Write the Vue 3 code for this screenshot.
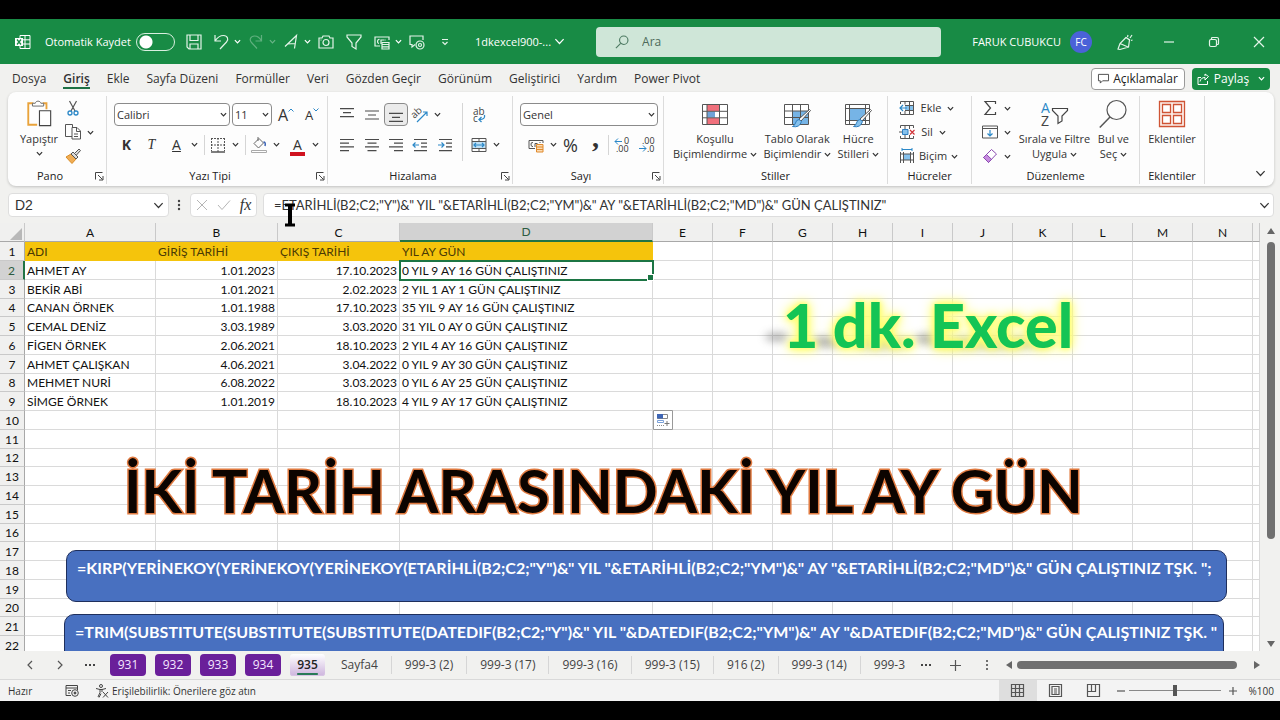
<script setup>
import { h, ref } from 'vue'

const Chev = () =>
  h('svg', { viewBox: '0 0 8 8', width: 7, height: 7, fill: 'none', stroke: 'currentColor', 'stroke-width': 1.4, 'aria-hidden': 'true' }, [
    h('path', { d: 'M1 2.5 4 5.5 7 2.5' }),
  ])
const BigChev = () =>
  h('svg', { viewBox: '0 0 12 12', width: 11, height: 11, fill: 'none', stroke: 'currentColor', 'stroke-width': 1.3, 'aria-hidden': 'true' }, [
    h('path', { d: 'M1.5 3.5 6 8.2 10.5 3.5' }),
  ])
const Launcher = () =>
  h('svg', { viewBox: '0 0 9 9', width: 9, height: 9, fill: 'none', stroke: '#444', 'stroke-width': 1, 'aria-hidden': 'true' }, [
    h('path', { d: 'M.5 7.5V.5H7.5M3 3 7.5 7.5M8 4V8H4' }),
  ])
const Lines = (props) =>
  h('svg', { viewBox: '0 0 16 16', width: 16, height: 16, fill: 'none', stroke: '#4a4a4a', 'stroke-width': 1.2, 'aria-hidden': 'true' }, [
    h('path', { d: props.d }),
  ])
Lines.props = ['d']

const menu = ['Dosya', 'Giriş', 'Ekle', 'Sayfa Düzeni', 'Formüller', 'Veri', 'Gözden Geçir', 'Görünüm', 'Geliştirici', 'Yardım', 'Power Pivot']
const columns = ['A', 'B', 'C', 'D', 'E', 'F', 'G', 'H', 'I', 'J', 'K', 'L', 'M', 'N', '']
const data = [
  ['ADI', 'GİRİŞ TARİHİ', 'ÇIKIŞ TARİHİ', 'YIL AY GÜN'],
  ['AHMET AY', '1.01.2023', '17.10.2023', '0 YIL 9 AY 16 GÜN ÇALIŞTINIZ'],
  ['BEKİR ABİ', '1.01.2021', '2.02.2023', '2 YIL 1 AY 1 GÜN ÇALIŞTINIZ'],
  ['CANAN ÖRNEK', '1.01.1988', '17.10.2023', '35 YIL 9 AY 16 GÜN ÇALIŞTINIZ'],
  ['CEMAL DENİZ', '3.03.1989', '3.03.2020', '31 YIL 0 AY 0 GÜN ÇALIŞTINIZ'],
  ['FİGEN ÖRNEK', '2.06.2021', '18.10.2023', '2 YIL 4 AY 16 GÜN ÇALIŞTINIZ'],
  ['AHMET ÇALIŞKAN', '4.06.2021', '3.04.2022', '0 YIL 9 AY 30 GÜN ÇALIŞTINIZ'],
  ['MEHMET NURİ', '6.08.2022', '3.03.2023', '0 YIL 6 AY 25 GÜN ÇALIŞTINIZ'],
  ['SİMGE ÖRNEK', '1.01.2019', '18.10.2023', '4 YIL 9 AY 17 GÜN ÇALIŞTINIZ'],
]
const purple = ['931', '932', '933', '934']
const sheets = ['Sayfa4', '999-3 (2)', '999-3 (17)', '999-3 (16)', '999-3 (15)', '916 (2)', '999-3 (14)', '999-3']
const formula = ref('=ETARİHLİ(B2;C2;"Y")&" YIL "&ETARİHLİ(B2;C2;"YM")&" AY "&ETARİHLİ(B2;C2;"MD")&" GÜN ÇALIŞTINIZ"')
const cellName = ref('D2')
const zoom = ref(50)
</script>

<template>
  <div class="screen">
    <div class="window">
      <header class="titlebar">
        <div class="quick">
          <svg class="logo" viewBox="0 0 16 16" width="16" height="16" fill="none" stroke="#fff"><path d="M5 1.500h10v13H5zM5 5.800h10M5 10h10M10 1.500v13" /><rect x="0" y="4" width="8" height="8" fill="#fff" stroke="none" /><path d="M2 5.500 6 10.500M6 5.500 2 10.500" stroke="#188b45" stroke-width="1.300" /></svg>
          <label class="auto" for="autosave">Otomatik Kaydet</label>
          <input id="autosave" class="toggle" type="checkbox" role="switch" />
          <button class="q save" aria-label="Kaydet"><svg viewBox="0 0 16 16" width="16" height="16"><path d="M1 1h14v14H3L1 13zM4 1v5.500h8V1M4 15v-5h8v5" /></svg></button>
          <button class="q" aria-label="Geri Al"><svg viewBox="0 0 16 16" width="16" height="16"><path d="M2 1v6h6M2 7C4 4 7 1.500 10.500 1.500c4 0 5.500 4 3 6.500L7 15" /></svg></button>
          <button class="qc" aria-label="Geri alma listesi"><Chev /></button>
          <button class="q dim" aria-label="Yinele"><svg viewBox="0 0 16 16" width="16" height="16"><path d="M13.500 1v6h-6M13.500 7C12 4 9 2 6.500 2 2.500 2 1 6 3.500 8.500L9 14.500" /></svg></button>
          <button class="qc dim" aria-label="Yineleme listesi"><Chev /></button>
          <button class="q" aria-label="Yazı"><svg viewBox="0 0 16 16" width="16" height="16"><path d="M2 12.500 13.500 1.500 11.500 14.500M4.500 10l7.500-.500" /></svg></button>
          <button class="qc" aria-label="Yazı seçenekleri"><Chev /></button>
          <button class="q cam" aria-label="Kamera"><svg viewBox="0 0 16 16" width="16" height="16"><path d="M1 4h3l1-2h6l1 2h3v10H1zM2.500 6h1" /><circle cx="8" cy="8.500" r="3" /></svg></button>
          <button class="q filter" aria-label="Filtre"><svg viewBox="0 0 16 16" width="16" height="16"><path d="M1 1h14v2L10 9v6l-4-2.500V9L1 3z" /></svg></button>
          <button class="q" aria-label="Muhasebe"><svg viewBox="0 0 16 16" width="16" height="16"><path d="M15 6V3H1v9h5M5.500 5.500C3 5 3 9.500 5 9.500M7 10V6h3M11 5.500v1" /><path d="M8 8.500h7V15H8zM8 10.500h7M8 12.800h7" /></svg></button>
          <button class="qc" aria-label="Muhasebe seçenekleri"><Chev /></button>
          <button class="q" aria-label="Nesne"><svg viewBox="0 0 16 16" width="16" height="16"><path d="M14 6V2H1v8.500h2V13l3-2.500" /><circle cx="11" cy="11" r="4" /><circle cx="11" cy="11" r="1.500" /></svg></button>
          <button class="q more" aria-label="Araç çubuğunu özelleştir"><svg viewBox="0 0 8 8" width="8" height="8"><path d="M1 1.500h6M1.500 4 4 6.500 6.500 4" /></svg></button>
        </div>
        <button class="doc">1dkexcel900-... <BigChev /></button>
        <label class="search">
          <svg viewBox="0 0 16 16" width="14" height="14" fill="none" stroke="#4d7a62" stroke-width="1.300"><circle cx="10" cy="6" r="4.800" /><path d="M6.500 9.500 1 15" /></svg>
          <input type="text" placeholder="Ara" aria-label="Ara" />
        </label>
        <div class="account">
          <span>FARUK CUBUKCU</span>
          <span class="avatar">FC</span>
          <button class="q pen" aria-label="Çizim"><svg viewBox="0 0 16 16" width="16" height="16"><path d="M9 3.500 3 9.500 1 15l2 .500L11.500 13l1-7zM3 9.500l8 3.500M9 3.500l4 2.500M10.500 3l.500-2M13 4l2-3M14 6.500l1.500-.500" /></svg></button>
          <button class="w" aria-label="Simge durumuna küçült"><svg viewBox="0 0 10 10" width="10" height="10"><path d="M0 5h10" /></svg></button>
          <button class="w" aria-label="Önceki boyut"><svg viewBox="0 0 10 10" width="10" height="10"><rect x=".5" y="2.500" width="7" height="7" rx="1.500" /><path d="M2.500 2.500V1.500q0-1 1-1h4.500q1.500 0 1.500 1.500v4.500q0 1-1 1h-1" /></svg></button>
          <button class="w" aria-label="Kapat"><svg viewBox="0 0 10 10" width="10" height="10"><path d="M0 0 10 10M10 0 0 10" /></svg></button>
        </div>
      </header>

      <nav class="menubar">
        <a v-for="m in menu" :key="m" href="#" :class="{ on: m === 'Giriş' }">{{ m }}</a>
        <button class="comments"><svg viewBox="0 0 12 12" width="11" height="11" fill="none" stroke="#444"><path d="M.5 1.500h11v7H5L2.500 11V8.500h-2z" /></svg>Açıklamalar</button>
        <button class="share"><svg viewBox="0 0 12 12" width="12" height="12" fill="none" stroke="#fff"><path d="M4 4.500H1v7h9.500V8M3 8.500C3.500 6 5 4.500 8 4.500V7l3.500-3.500L8 1v2" /></svg>Paylaş<Chev /></button>
      </nav>

      <section class="ribbon" aria-label="Şerit">
        <div class="group pano">
          <div class="body">
            <button class="big paste">
              <svg viewBox="0 0 28 30" width="28" height="30" fill="none"><path d="M8 3.500H2.500v23H12M18 3.500h4V10" stroke="#e9a33b" stroke-width="2" /><path d="M7 6.500V3.500h3C10.500.500 15.500.500 16 3.500h3v3z" fill="#fff" stroke="#666" /><path d="M14.500 11.500h12v16h-12z" fill="#fff" stroke="#444" stroke-width="1.200" /></svg>
              <span>Yapıştır</span><Chev />
            </button>
            <div class="stack">
              <button aria-label="Kes"><svg viewBox="0 0 16 16" width="16" height="16" fill="none"><path d="M4.500 1 10 11M11.500 1 6 11" stroke="#555" stroke-width="1.200" /><circle cx="5" cy="13" r="2" stroke="#2b88c8" stroke-width="1.300" /><circle cx="11" cy="13" r="2" stroke="#2b88c8" stroke-width="1.300" /></svg></button>
              <button aria-label="Kopyala"><svg viewBox="0 0 16 16" width="16" height="16" fill="none" stroke="#555"><path d="M7 12.500H.500V.500h7V3M7 3.500h5l3.500 3.500v8H7zM11.500 4v3.500H15M9 10h4M9 12.500h4" /></svg><Chev /></button>
              <button aria-label="Biçim Boyacısı"><svg viewBox="0 0 16 16" width="16" height="16" fill="none"><path d="M1 9 6 6l5 5-4 4.500Q5 13.500 1 9z" fill="#f0ad55" stroke="#d98d26" /><path d="M6 6l2-2 5 5-2 2zM10 5l4-4 1.500 1.500-4 4.500" fill="#ddd" stroke="#555" /></svg></button>
            </div>
          </div>
          <div class="caption"><span>Pano</span><button aria-label="Pano ayarları"><Launcher /></button></div>
        </div>

        <div class="group font">
          <div class="body col">
            <div class="line">
              <label class="combo face"><select aria-label="Yazı tipi"><option>Calibri</option></select><Chev /></label>
              <label class="combo size"><select aria-label="Yazı boyutu"><option>11</option></select><Chev /></label>
              <button class="grow" aria-label="Büyüt">A<svg viewBox="0 0 6 4" width="6" height="4"><path d="M.5 3.500 3 1 5.500 3.500" fill="none" stroke="#2b88c8" /></svg></button>
              <button class="grow small" aria-label="Küçült">A<svg viewBox="0 0 6 4" width="6" height="4"><path d="M.5.5 3 3 5.500.5" fill="none" stroke="#2b88c8" /></svg></button>
            </div>
            <div class="line two">
              <button class="t b">K</button><button class="t i">T</button>
              <button class="t u">A</button><button class="c" aria-label="Altı çizili seçenekleri"><Chev /></button>
              <i class="rule"></i>
              <button class="t" aria-label="Kenarlıklar"><svg viewBox="0 0 16 16" width="16" height="16" fill="none" stroke="#555"><path d="M1 15h14" stroke-width="1.500" /><path d="M1.500 1v13M14.500 1v13M8 1v14M1 1.500h14M1 8h14" stroke-dasharray="2 1" /></svg></button>
              <button class="c" aria-label="Kenarlık seçenekleri"><Chev /></button>
              <i class="rule"></i>
              <button class="t" aria-label="Dolgu rengi"><svg viewBox="0 0 16 16" width="16" height="16" fill="none" stroke="#666"><path d="M3 6.500 8 1.500l4.500 4.500-5 5zM7 0v4" /><path d="M12.500 5q2.500 0 1.500 4" stroke="#3b63b5" stroke-width="1.500" /><path d="M.5 13.500h15v2H.5z" stroke="#aaa" fill="#fff" /></svg></button>
              <button class="c" aria-label="Dolgu seçenekleri"><Chev /></button>
              <button class="t red">A</button><button class="c" aria-label="Yazı rengi seçenekleri"><Chev /></button>
            </div>
          </div>
          <div class="caption"><span>Yazı Tipi</span><button aria-label="Yazı tipi ayarları"><Launcher /></button></div>
        </div>

        <div class="group align">
          <div class="body">
            <div class="matrix">
              <button aria-label="Üste hizala"><Lines d="M1 1.600h14M4 5.600h8M1 9.600h14" /></button>
              <button aria-label="Ortaya hizala"><Lines d="M1 4h14M4 8h8M1 12h14" /></button>
              <button class="pressed" aria-label="Alta hizala"><Lines d="M1 6.400h14M4 10.400h8M1 14.400h14" /></button>
              <button aria-label="Yönlendirme"><svg viewBox="0 0 18 16" width="18" height="16" fill="none"><text x="2" y="11" font-size="10" fill="#444" transform="rotate(-42 4 10)">ab</text><path d="M6 15 16 5M12 5h4v4" stroke="#2b88c8" stroke-width="1.200" /></svg></button>
              <button aria-label="Yönlendirme seçenekleri"><Chev class="left" /></button>
              <button aria-label="Sola hizala"><Lines d="M1 2.500h14M1 6.200h9M1 9.900h14M1 13.600h9" /></button>
              <button aria-label="Ortala"><Lines d="M1 2.500h14M3.500 6.200h9M1 9.900h14M3.500 13.600h9" /></button>
              <button aria-label="Sağa hizala"><Lines d="M1 2.500h14M6 6.200h9M1 9.900h14M6 13.600h9" /></button>
              <button aria-label="Girintiyi azalt"><svg viewBox="0 0 16 16" width="16" height="16" fill="none" stroke="#4a4a4a" stroke-width="1.200"><path d="M2 2.500h13M9 6.200h6M9 9.900h6M2 13.600h13" /><path d="M7 8H1M3.500 5.500 1 8l2.500 2.500" stroke="#2b88c8" /></svg></button>
              <button aria-label="Girintiyi artır"><svg viewBox="0 0 16 16" width="16" height="16" fill="none" stroke="#4a4a4a" stroke-width="1.200"><path d="M2 2.500h13M9 6.200h6M9 9.900h6M2 13.600h13" /><path d="M1 8h6M4.500 5.500 7 8l-2.500 2.500" stroke="#2b88c8" /></svg></button>
            </div>
            <i class="rule tall"></i>
            <div class="wrapcol">
              <button aria-label="Metni kaydır"><svg viewBox="0 0 16 16" width="16" height="16" fill="none"><text x="2" y="8" font-size="10" fill="#444">ab</text><text x="2" y="15" font-size="10" fill="#444">c</text><path d="M13.500 8q1 4.500-5 4.500M10.500 10 8 12.500l2.500 2.500" stroke="#2b88c8" stroke-width="1.300" /></svg></button>
              <button aria-label="Birleştir ve ortala"><svg viewBox="0 0 16 16" width="16" height="16" fill="none"><path d="M1 4h14v8H1z" fill="#bfe0f5" /><path d="M1 1.500h14v13H1zM1 4.500h14M1 11.500h14M8 1.500v3M8 11.500v3" stroke="#555" /><path d="M3 8h10M5 6 3 8l2 2M11 6l2 2-2 2" stroke="#2b88c8" stroke-width="1.200" /></svg><Chev /></button>
            </div>
          </div>
          <div class="caption"><span>Hizalama</span><button aria-label="Hizalama ayarları"><Launcher /></button></div>
        </div>

        <div class="group number">
          <div class="body col">
            <div class="line"><label class="combo wide"><select aria-label="Sayı biçimi"><option>Genel</option></select><Chev /></label></div>
            <div class="line two">
              <button class="t" aria-label="Muhasebe biçimi"><svg viewBox="0 0 16 16" width="16" height="16" fill="none" stroke="#555"><path d="M15 6V3.500H1v8h6M5 5.500Q2.500 5 3 8q.5 2 2 1.500M7 10V6.500h2.500M12 6V5" /><path d="M8.500 7.500h6.500V15H8.500zM8.500 10h6.500M8.500 12.500h6.500" fill="#fbdcb5" stroke="#e08a2c" /></svg></button>
              <button class="c" aria-label="Muhasebe seçenekleri"><Chev /></button>
              <button class="t pc">%</button><button class="t comma" aria-label="Virgül stili">,</button>
              <i class="rule"></i>
              <button class="t" aria-label="Ondalık artır"><svg viewBox="0 0 16 16" width="16" height="16" fill="none"><path d="M8 4.500H1M4 1.500 1 4.500l3 3" stroke="#2b88c8" /><text x="10" y="7" font-size="9" fill="#333">0</text><text x="2" y="15" font-size="9" fill="#333">.00</text></svg></button>
              <button class="t" aria-label="Ondalık azalt"><svg viewBox="0 0 16 16" width="16" height="16" fill="none"><path d="M0 11.500h7M4 8.500l3 3-3 3" stroke="#2b88c8" /><text x="3" y="7" font-size="9" fill="#333">.00</text><text x="8" y="15" font-size="9" fill="#333">.0</text></svg></button>
            </div>
          </div>
          <div class="caption"><span>Sayı</span><button aria-label="Sayı ayarları"><Launcher /></button></div>
        </div>

        <div class="group styles">
          <div class="body">
            <button class="big"><svg viewBox="0 0 28 26" width="28" height="26" fill="none"><path d="M1.500 3.500h25v20h-25z" fill="#fff" stroke="#555" /><path d="M6 4h12v6H6zM6 17h12v6H6z" fill="#f0707c" /><path d="M6 10.500h8v6H6z" fill="#6fa3d8" /><path d="M1.500 10.300h25M1.500 16.800h25M6 3.500v20M18.500 3.500v20" stroke="#555" /></svg><span>Koşullu<br />Biçimlendirme <Chev /></span></button>
            <button class="big"><svg viewBox="0 0 28 26" width="28" height="26" fill="none"><path d="M1.500 3.500h24v20h-24z" fill="#fff" stroke="#555" /><path d="M10 10h15v13H10z" fill="#76b4e6" /><path d="M1.500 10h24M1.500 16.500h24M9.500 3.500v20M17.500 3.500v20" stroke="#555" /><path d="M27.500 9.500 18 20l-2-2L26.500 8.500z" fill="#fff" stroke="#555" /><path d="M16 18.500q-3 .5-3.500 3.500-1 3-3 3.500 7 1.500 9-5z" fill="#86c1ec" stroke="#2f7fc0" /></svg><span>Tablo Olarak<br />Biçimlendir <Chev /></span></button>
            <button class="big"><svg viewBox="0 0 28 26" width="28" height="26" fill="none"><path d="M1.500 3.500h24v20h-24z" fill="#fff" stroke="#555" /><path d="M5.500 8h16v11h-16z" fill="#76b4e6" /><path d="M1.500 7.500h24M1.500 19.500h24M5.500 3.500v20M21.500 3.500v20" stroke="#555" /><path d="M27.500 9.500 18 20l-2-2L26.500 8.500z" fill="#fff" stroke="#555" /><path d="M16 18.500q-3 .5-3.500 3.500-1 3-3 3.500 7 1.500 9-5z" fill="#86c1ec" stroke="#2f7fc0" /></svg><span>Hücre<br />Stilleri <Chev /></span></button>
          </div>
          <div class="caption"><span>Stiller</span></div>
        </div>

        <div class="group cells">
          <div class="body stack">
            <button class="insert"><svg viewBox="0 0 16 16" width="16" height="16" fill="none"><path d="M6 5.500h9v5H6z" fill="#86c1ec" /><path d="M1.500 4V1.500h13v13h-13V12M6 1.500v3M10.500 1.500v13M6 5.500h9M6 10.500h9M6 11v3.500" stroke="#555" /><path d="M8 8H1M4 5 1 8l3 3" stroke="#2b88c8" stroke-width="1.200" /></svg><span>Ekle</span><Chev /></button>
            <button><svg viewBox="0 0 16 16" width="16" height="16" fill="none"><path d="M1.500 4V1.500h13V4M1.500 12v2.500h13V12M6 1.500V5M10.500 1.500V5M6 11v3.500M10.500 11v3.500M0 8h3" stroke="#555" /><path d="M3.500 5.500h5.500v5H3.500z" fill="#86c1ec" stroke="#2f7fc0" /><path d="m11 6 4.500 4.500M15.500 6 11 10.500" stroke="#d13438" stroke-width="1.200" /></svg><span>Sil</span><Chev /></button>
            <button><svg viewBox="0 0 16 16" width="16" height="16" fill="none"><path d="M4.500 6h7v6h-7z" fill="#86c1ec" /><path d="M1.500 4v11M14.500 4v11M1 6h14M1 12h14M4.500 4v11M11.500 4v11" stroke="#555" /><path d="M3 1.500h10M3 0v3M13 0v3" stroke="#2b88c8" /></svg><span>Biçim</span><Chev /></button>
          </div>
          <div class="caption"><span>Hücreler</span></div>
        </div>

        <div class="group editing">
          <div class="body">
            <div class="stack">
              <button aria-label="Otomatik toplam"><svg viewBox="0 0 16 16" width="16" height="16" fill="none" stroke="#444" stroke-width="1.200"><path d="M13.500 4V1.500H3L8.500 8 3 14.500h10.500V12" /></svg><Chev /></button>
              <button aria-label="Doldur"><svg viewBox="0 0 16 16" width="16" height="16" fill="none"><path d="M.5 2h15v12H.5zM.5 4.500h15" stroke="#555" /><path d="M8 6v6M5.500 9.500 8 12l2.500-2.500" stroke="#2b88c8" stroke-width="1.200" /></svg><Chev /></button>
              <button aria-label="Temizle"><svg viewBox="0 0 16 16" width="16" height="16" fill="none"><path d="m1.500 9.500 8-8 5 4.500-8 8.500z" fill="#fff" stroke="#8a4bb0" /><path d="m1.500 9.500 3-3 5 4.800-3 3.200z" fill="#c78be0" stroke="#8a4bb0" /></svg><Chev /></button>
            </div>
            <button class="big"><svg viewBox="0 0 28 26" width="28" height="26" fill="none"><text x="1" y="12" font-size="14" fill="#2b88c8">A</text><text x="1" y="25" font-size="14" fill="#444">Z</text><path d="M12.500 7.500h15v2l-5.500 5.500v5l-4 2.500V15l-5.500-5.500z" stroke="#444" stroke-width="1.200" /></svg><span>Sırala ve Filtre<br />Uygula <Chev /></span></button>
            <button class="big"><svg viewBox="0 0 28 28" width="28" height="28" fill="none" stroke="#555" stroke-width="1.200"><circle cx="17.500" cy="10" r="9.500" /><path d="M11 17 .8 27.500" stroke-width="1.500" /></svg><span>Bul ve<br />Seç <Chev /></span></button>
          </div>
          <div class="caption"><span>Düzenleme</span></div>
        </div>

        <div class="group addins">
          <div class="body">
            <button class="big"><svg viewBox="0 0 28 28" width="28" height="28" fill="none" stroke="#cf5435" stroke-width="1.300"><path d="M1.500 1.500h25v25h-25z" fill="#fdf1ec" /><path d="M4.500 4.500h8v8h-8zM15.500 4.500h8v8h-8zM4.500 15.500h8v8h-8zM15.500 15.500h8v8h-8z" fill="#fff" /></svg><span>Eklentiler</span></button>
          </div>
          <div class="caption"><span>Eklentiler</span></div>
        </div>
        <button class="collapse" aria-label="Şeridi daralt"><BigChev /></button>
      </section>

      <section class="formulabar">
        <label class="namebox"><input v-model="cellName" type="text" aria-label="Ad kutusu" /><BigChev /></label>
        <svg class="dots" viewBox="0 0 4 12" width="4" height="12" fill="#444"><circle cx="2" cy="2" r="1.200" /><circle cx="2" cy="6" r="1.200" /><circle cx="2" cy="10" r="1.200" /></svg>
        <div class="fx">
          <button aria-label="İptal"><svg viewBox="0 0 12 12" width="12" height="12" stroke="#b5b5b5"><path d="m1 1 10 10M11 1 1 11" /></svg></button>
          <button aria-label="Gir"><svg viewBox="0 0 14 12" width="14" height="12" fill="none" stroke="#b5b5b5"><path d="m1 6 4 4.500L13 1.500" /></svg></button>
          <button class="fn">fx</button>
        </div>
        <label class="formula"><input v-model="formula" type="text" aria-label="Formül çubuğu" /><BigChev /></label>
        <svg class="ibeam" viewBox="0 0 10 24" width="10" height="24" fill="none" stroke="#000"><path d="M0 2h10M0 22h10" stroke-width="3" /><path d="M5 2v20" stroke-width="4" /></svg>
      </section>

      <main class="sheetarea">
        <div class="canvas">
          <table>
            <colgroup><col class="rh" /><col class="ca" /><col class="cb" /><col class="cb" /><col class="cd" /><col v-for="n in 10" :key="n" class="ce" /><col /></colgroup>
            <thead>
              <tr><th class="corner"><svg viewBox="0 0 12 12" width="12" height="12"><path d="M12 0v12H0z" fill="#b8b8b8" /></svg></th><th v-for="(c, i) in columns" :key="i" scope="col" :class="{ sel: c === 'D' }">{{ c }}</th></tr>
            </thead>
            <tbody>
              <tr v-for="r in 22" :key="r">
                <th scope="row" :class="{ sel: r === 2 }">{{ r }}</th>
                <td v-for="(c, i) in columns" :key="i" :class="{ head: r === 1 && i < 4, num: r > 1 && (i === 1 || i === 2), active: r === 2 && i === 3 }">{{ data[r - 1]?.[i] }}</td>
              </tr>
            </tbody>
          </table>
          <svg class="fillopt" viewBox="0 0 20 20" width="20" height="20" fill="none"><path d="M.5.5h19v19H.5z" fill="#fff" stroke="#999" /><path d="M4.500 4.500h10v4h-10z" stroke="#888" /><path d="M4 4h6v4.500H4z" fill="#3f66b5" /><path d="M4.500 10.500h6v2h-6z" stroke="#7aa0d8" /><path d="M4 15.500h8" stroke="#888" stroke-dasharray="1 1" /><path d="M14 11v5M11.500 13.500h5" stroke="#777" /></svg>
          <div class="brand">
            <svg class="haze" viewBox="0 0 320 30" width="320" height="30" fill="#555"><ellipse cx="16" cy="12" rx="12" ry="4" /><ellipse cx="66" cy="17" rx="16" ry="5" /><ellipse cx="120" cy="18" rx="26" ry="5" /><ellipse cx="168" cy="14" rx="14" ry="5" /><ellipse cx="230" cy="18" rx="60" ry="5" /></svg>
            <span>1 dk. Excel</span>
          </div>
          <h1 class="headline">İKİ TARİH ARASINDAKİ YIL AY GÜN</h1>
          <div class="note first">=KIRP(YERİNEKOY(YERİNEKOY(YERİNEKOY(ETARİHLİ(B2;C2;"Y")&amp;" YIL "&amp;ETARİHLİ(B2;C2;"YM")&amp;" AY "&amp;ETARİHLİ(B2;C2;"MD")&amp;" GÜN ÇALIŞTINIZ TŞK. ";</div>
          <div class="note second">=TRIM(SUBSTITUTE(SUBSTITUTE(SUBSTITUTE(DATEDIF(B2;C2;"Y")&amp;" YIL "&amp;DATEDIF(B2;C2;"YM")&amp;" AY "&amp;DATEDIF(B2;C2;"MD")&amp;" GÜN ÇALIŞTINIZ TŞK. "</div>
        </div>
        <div class="vscroll">
          <svg viewBox="0 0 8 6" width="8" height="6" fill="#666"><path d="M4 0 8 6H0z" /></svg>
          <div class="vtrack"><div class="vthumb"></div></div>
          <svg viewBox="0 0 8 6" width="8" height="6" fill="#666"><path d="M0 0h8L4 6z" /></svg>
        </div>
      </main>

      <nav class="sheets">
        <button class="nav" aria-label="Önceki"><svg viewBox="0 0 8 10" width="8" height="10"><path d="M6 1 2 5l4 4" /></svg></button>
        <button class="nav" aria-label="Sonraki"><svg viewBox="0 0 8 10" width="8" height="10"><path d="m2 1 4 4-4 4" /></svg></button>
        <button class="nav dot3" aria-label="Diğer sayfalar"><svg viewBox="0 0 12 4" width="12" height="4"><path d="M1 2h2M5 2h2M9 2h2" /></svg></button>
        <button v-for="p in purple" :key="p" class="tab p">{{ p }}</button>
        <button class="tab current">935</button>
        <button v-for="s in sheets" :key="s" class="tab plain">{{ s }}</button>
        <button class="dot3 nav end" aria-label="Daha fazla sayfa"><svg viewBox="0 0 12 4" width="12" height="4"><path d="M1 2h2M5 2h2M9 2h2" /></svg></button>
        <button class="nav add" aria-label="Yeni sayfa"><svg viewBox="0 0 11 11" width="11" height="11"><path d="M5.500 0v11M0 5.500h11" /></svg></button>
        <svg class="dots" viewBox="0 0 4 12" width="4" height="12" fill="#444"><circle cx="2" cy="2" r="1" /><circle cx="2" cy="6" r="1" /><circle cx="2" cy="10" r="1" /></svg>
        <div class="hscroll">
          <svg viewBox="0 0 6 8" width="6" height="8" fill="#666"><path d="M6 0v8L0 4z" /></svg>
          <div class="hthumb"></div>
          <svg viewBox="0 0 6 8" width="6" height="8" fill="#666"><path d="M0 0v8l6-4z" /></svg>
        </div>
      </nav>

      <footer class="status">
        <span class="ready">Hazır</span>
        <svg viewBox="0 0 14 12" width="14" height="12" fill="none" stroke="#444"><path d="M6 10.500H1V.500h11.500V5M1 3h11.500M3 5.500h3M3 8h2" /><circle cx="10" cy="8" r="3.300" /><circle cx="10" cy="8" r="1" fill="#444" /></svg>
        <button class="acc"><svg viewBox="0 0 14 14" width="14" height="14" fill="none" stroke="#444"><circle cx="6" cy="2" r="1.500" /><path d="M1 4.500 5 5.500v3L3 13M11 4.500 7 5.500v2.500M5 5.500h2M4 13.500l2-4M8 8l5 5.500M13 8l-5 5.500" /></svg>Erişilebilirlik: Önerilere göz atın</button>
        <div class="views">
          <button class="on" aria-label="Normal"><svg viewBox="0 0 13 13" width="13" height="13"><path d="M.5.5h12v12H.5zM.5 4.500h12M.5 8.500h12M4.500.5v12M8.500.5v12" /></svg></button>
          <button aria-label="Sayfa düzeni"><svg viewBox="0 0 13 13" width="13" height="13"><path d="M.5.5h12v12H.5zM3 2.500h7v8H3zM5 5h3M5 7h3M5 9h3" /></svg></button>
          <button aria-label="Sayfa sonu önizleme"><svg viewBox="0 0 13 13" width="13" height="13"><path d="M.5.5h12v12H.5zM4.500.5v7M.5 7.500h8v-7" /></svg></button>
        </div>
        <button class="pm" aria-label="Uzaklaştır"><svg viewBox="0 0 8 8" width="8" height="8"><path d="M0 4h8" /></svg></button>
        <input v-model="zoom" class="zoom" type="range" aria-label="Yakınlaştırma" />
        <button class="pm" aria-label="Yakınlaştır"><svg viewBox="0 0 8 8" width="8" height="8"><path d="M0 4h8M4 0v8" /></svg></button>
        <span class="pct">%100</span>
      </footer>
    </div>
  </div>
</template>

<style>
body { background: #000; }
</style>

<style scoped>
* { box-sizing: border-box; }
.screen { height: 100vh; padding: 19px 0; background: #000; font: 12px/16px "Open Sans", "Noto Sans", sans-serif; color: #333; overflow: hidden; }
.window { height: 100%; display: flex; flex-direction: column; background: #f1f1ef; }
button { border: 0; padding: 0; background: none; font: inherit; color: inherit; display: flex; align-items: center; justify-content: center; }
svg { flex: none; display: block; overflow: visible; }
a { color: inherit; text-decoration: none; }
input, select { font: inherit; color: inherit; }

.titlebar { flex: 0 0 45px; display: flex; align-items: center; background: #188b45; color: #fff; font-size: 11px; padding-right: 16px; }
.quick { display: flex; align-items: center; flex: 0 0 475px; padding-left: 15px; }
.auto { width: 85px; margin: 0 6px 0 14px; white-space: nowrap; }
.toggle { appearance: none; width: 39px; height: 18px; margin: 0 10px 0 0; border: 1px solid #d9efe0; border-radius: 9px; background: radial-gradient(circle at 9px 8px, #fff 6px, transparent 7px); }
.q { width: 18px; }
.q svg, .w svg { fill: none; stroke: #e4f4e9; stroke-width: 1.2; }
.save { margin-right: 9px; }
.qc { width: 14px; }
.dim { opacity: .35; }
.quick .qc + .q { margin-left: 3px; }
.cam, .filter { margin-right: 10px; }
.quick .cam { margin-left: 5px; }
.more { margin-left: 10px; }
.doc { gap: 3px; flex: 0 0 auto; white-space: nowrap; }
.search { display: flex; align-items: center; gap: 13px; flex: 0 1 345px; margin-left: 31px; height: 30px; padding-left: 19px; border-radius: 4px; background: #cfe6d8; }
.search input { flex: 1; min-width: 0; border: 0; background: none; outline: 0; padding: 0; font-size: 12px; }
.search input::placeholder { color: #4d6a5a; opacity: 1; }
.account { display: flex; align-items: center; margin-left: auto; white-space: nowrap; }
.avatar { width: 22px; height: 22px; border-radius: 50%; background: #4a62d8; font-size: 10px; line-height: 22px; text-align: center; margin: 0 24px 0 9px; }
.pen { margin-right: 30px; }
.w { width: 10px; margin-left: 35px; }
.pen + .w { margin-left: 0; }

.menubar { flex: 0 0 28px; display: flex; align-items: center; gap: 17px; padding: 1px 10px 0 12px; white-space: nowrap; }
.menubar .on { font-weight: 600; box-shadow: 0 2px 0 #1d7044; }
.comments, .share { height: 22px; border-radius: 4px; gap: 4px; }
.comments { margin-left: auto; width: 94px; border: 1px solid #9a9a9a; background: #fff; color: #222; }
.share { width: 78px; margin-left: -10px; background: #188b45; color: #fff; gap: 5px; }
.share svg:last-child { margin-left: 4px; }

.ribbon { flex: 0 0 94px; display: flex; margin: 0 6px 0 8px; padding: 4px 0 2px; border-radius: 8px; background: #fdfdfd; box-shadow: 0 1px 3px #0003; font-size: 11px; }
.group { display: flex; flex-direction: column; flex: none; border-right: 1px solid #dcdcdc; }
.body { flex: 1; display: flex; }
.col { flex-direction: column; }
.caption { display: flex; align-items: center; height: 16px; color: #222; }
.caption span { flex: 1; text-align: center; }
.caption button { width: 14px; }
.pano { width: 99px; }
.font { width: 221px; }
.align { width: 185px; }
.number { width: 151px; }
.styles { width: 224px; }
.cells { width: 84px; }
.editing { width: 168px; }
.addins { width: 65px; }
.big { flex-direction: column; justify-content: flex-start; align-self: flex-start; padding-top: 4px; line-height: 15px; white-space: nowrap; }
.big > svg:first-child { height: 28px; }
.big > span { margin-top: 3px; display: block; text-align: center; }
.big span svg { display: inline-block; }
.paste { width: 52px; margin-left: 5px; }
.paste > span { margin-bottom: 4px; }
.stack { display: flex; flex-direction: column; padding-top: 0; }
.stack button { height: 24px; gap: 6px; justify-content: flex-start; }
.line { display: flex; align-items: center; height: 23px; margin: 7px 0 0 7px; gap: 2px; }
.line.two { gap: 0; margin-top: 7px; }
.combo { display: flex; flex: none; align-items: center; height: 23px; border: 1px solid #8b8b8b; border-radius: 4px; background: #fff; padding-right: 2px; }
.combo select { appearance: none; border: 0; background: none; outline: 0; flex: 1; min-width: 0; padding: 0 2px; }
.face { width: 116px; }
.size { width: 40px; }
.wide { width: 138px; }
.grow { width: 24px; font-size: 16px; }
.grow svg { align-self: flex-start; margin-top: 1px; }
.grow.small { font-size: 13px; }
.t { width: 25px; font-size: 14px; height: 22px; }
.c { width: 10px; }
.b { font-weight: 700; }
.i { font-style: italic; font-family: "Liberation Serif", serif; }
.u { text-decoration: underline; }
.red { margin-left: 4px; position: relative; }
.red::after { content: ""; position: absolute; left: 5px; right: 5px; bottom: 0; height: 4px; background: #d0121f; }
.rule { width: 1px; height: 20px; background: #d5d5d5; margin: 0 0 0 5px; }
.matrix { width: 122px; margin-left: 7px; display: grid; grid-template-columns: repeat(5, 1fr); grid-template-rows: 23px 23px; row-gap: 7px; padding-top: 7px; }
.pressed { border: 1px solid #8b8b8b; border-radius: 4px; background: #ebebeb; }
.left { margin-right: 14px; }
.rule.tall { height: 58px; margin: 7px 8px 0 5px; }
.wrapcol { display: flex; flex-direction: column; gap: 7px; padding-top: 7px; }
.wrapcol button { height: 23px; gap: 6px; justify-content: flex-start; }
.pc { font-size: 18px; }
.comma { font: 700 28px/1 "Liberation Serif", serif; padding-bottom: 14px; }
.number .two { margin-left: 10px; }
.number .rule { margin: 0; }
.styles .body { justify-content: space-between; padding: 0 8px 0 9px; }
.cells .stack { padding-left: 11px; }
.cells .stack span { min-width: 16px; }
.cells .stack .insert span { min-width: 24px; }
.cells .stack button { gap: 4px; }
.editing .body { padding: 0 10px; justify-content: space-between; }
.addins .body { justify-content: center; }
.collapse { margin: 70px 8px 0 auto; height: 14px; }

.formulabar { flex: 0 0 37px; position: relative; display: flex; align-items: center; padding: 1px 6px 0 8px; }
.namebox, .fx, .formula { display: flex; align-items: center; height: 24px; border: 1px solid #dedede; border-radius: 4px; background: #fff; }
.namebox { width: 161px; padding: 0 4px 0 6px; font: 14px/20px "Liberation Sans", sans-serif; }
.namebox input, .formula input { flex: 1; min-width: 0; border: 0; padding: 0; outline: 0; background: none; }
.dots { margin: 0 9px 0 8px; }
.fx { width: 67px; justify-content: space-around; }
.fn { font: italic 16px/20px "Liberation Serif", serif; }
.formula { flex: 1; margin-left: 6px; padding: 0 3px 0 10px; font: 13px/20px Lato, "Open Sans", sans-serif; }
.ibeam { position: absolute; left: 285px; top: 17px; z-index: 3; }

.sheetarea { flex: 1; min-height: 0; display: flex; }
.canvas { flex: 1; position: relative; overflow: hidden; background: #fff; font-family: Lato, "Open Sans", sans-serif; }
table { border-collapse: separate; border-spacing: 0; table-layout: fixed; width: 100%; font-size: 12px; line-height: 16px; color: #111; }
.rh { width: 25px; } .ca { width: 131px; } .cb { width: 122px; } .cd { width: 253px; } .ce { width: 60px; }
tr { height: 19px; }
tbody tr:nth-child(4n) { height: 18px; }
th, td { padding: 1px 2px 0; border: 0 solid #dadada; border-width: 0 1px 1px 0; white-space: nowrap; overflow: hidden; text-align: left; }
th { background: #f0f0ef; font-weight: 400; text-align: center; padding: 1px 0 0; border-color: #c9c9c9; }
thead th { border-bottom-color: #a8a8a8; }
tbody th { border-right-color: #a8a8a8; }
th.sel { background: #d2d2d2; color: #2c5b41; }
thead th.sel { border-bottom: 2px solid #217346; padding-top: 0; }
tbody th.sel { border-right: 2px solid #217346; }
.corner svg { margin: 2px 0 0 10px; }
.head { background: #f5c40c; color: #4a3a05; border-color: #f5c40c; }
.num { text-align: right; }
.active { outline: 2px solid #1c7544; outline-offset: -1px; position: relative; overflow: visible; }
.active::after { content: ""; position: absolute; right: -2px; bottom: -2px; width: 5px; height: 5px; background: #1c7544; border: 1px solid #fff; }
.fillopt { position: absolute; left: 653px; top: 187px; }
.brand { position: absolute; left: 783px; top: 66px; font-size: 61px; line-height: 72px; font-weight: 900; color: #14c455; white-space: nowrap; text-shadow: 0 0 4px #ffff70, 0 0 8px #ffff70, 0 0 12px #ffff70, 0 0 16px #ffffa0; }
.brand span { position: relative; }
.haze { position: absolute; left: -22px; top: 36px; filter: blur(4px); opacity: .5; }
.headline { position: absolute; left: 124px; top: 232px; margin: 0; font-size: 59px; line-height: 72px; font-weight: 700; color: #0c0400; -webkit-text-stroke: 3px #e07a40; paint-order: stroke fill; white-space: nowrap; }
.note { position: absolute; height: 52px; border: 1px solid #1f2f5c; border-radius: 10px; background: #4870c0; color: #fff; font-size: 16px; line-height: 20px; font-weight: 700; padding: 7px 10px; white-space: nowrap; }
.first { left: 66px; right: 33px; top: 327px; }
.second { left: 64px; right: 36px; top: 391px; }

.vscroll { flex: 0 0 20px; display: flex; flex-direction: column; align-items: center; padding: 5px 0 4px 2px; }
.vtrack { flex: 1; width: 8px; padding: 8px 0; }
.vthumb { height: 76%; border-radius: 4px; background: #707070; }

.sheets { flex: 0 0 29px; display: flex; align-items: center; border-bottom: 1px solid #d9d9d9; padding-left: 26px; white-space: nowrap; color: #444; }
.nav { width: 8px; margin-right: 22px; }
.nav svg, .views svg, .pm svg { fill: none; stroke: #555; stroke-width: 1.2; }
.dot3 { width: 12px; margin-right: 14px; margin-left: -2px; }
.dot3 svg { stroke: #444; stroke-width: 2; }
.tab { height: 22px; }
.tab.p { width: 36px; margin-right: 9px; border-radius: 4px; background: #6a1f9a; color: #f4e6ff; }
.current { width: 35px; margin-right: 3px; border-radius: 3px; background: linear-gradient(#fff, #cdb4dd); color: #222; font-weight: 600; box-shadow: inset 0 -1px #d8c5e4; text-decoration: underline; text-decoration-color: #2a7a58; text-decoration-thickness: 2px; text-underline-offset: 4px; }
.plain { padding: 0 13px; height: 18px; border-right: 1px solid #d6d6d6; }
.plain:nth-last-child(5) { border: 0; padding-right: 0; }
.end { margin: 0 18px 0 15px; }
.add { width: 11px; }
.sheets .dots { margin: 0 17px 0 2px; }
.hscroll { flex: 1; display: flex; align-items: center; gap: 5px; padding-right: 20px; }
.hthumb { flex: 1; height: 8px; border-radius: 4px; background: #707070; margin-right: 12px; }

.status { flex: 0 0 21px; display: flex; align-items: center; font-size: 10px; padding: 0 6px 0 8px; background: #f3f3f3; }
.ready { width: 57px; }
.acc { gap: 3px; margin-left: 16px; }
.views { margin-left: auto; display: flex; align-self: stretch; }
.views button { width: 38px; }
.views .on { background: #dedede; }
.pm { margin-left: 4px; }
.zoom { appearance: none; width: 92px; height: 12px; margin: 0 4px; background: linear-gradient(#888, #888) center / 100% 1px no-repeat; }
.zoom::-webkit-slider-thumb { appearance: none; width: 4px; height: 11px; background: #555; }
.pct { margin-left: 12px; }
</style>
